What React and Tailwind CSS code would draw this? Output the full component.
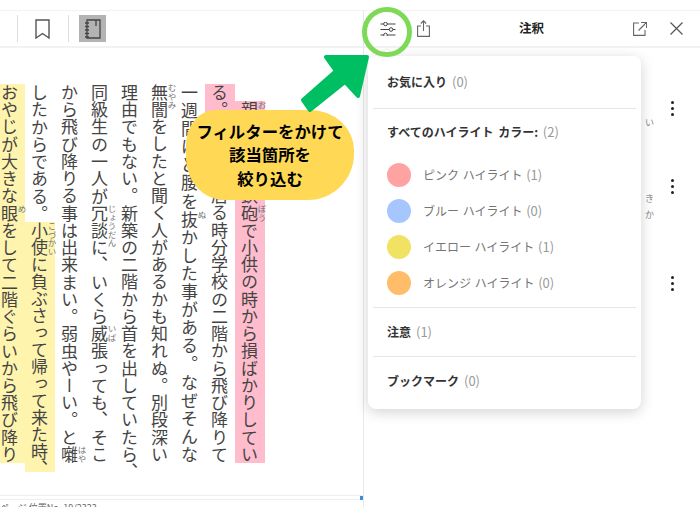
import React from "react";

const jp = "[font-family:'Noto_Sans_CJK_JP','Noto_Sans',sans-serif]";

// furigana sits on the right of the base text without widening the line
const R = ({ b, t }) => (
  <span className="relative inline-block">
    {b}
    <span className="absolute inset-y-0 -right-[2px] flex w-[9px] justify-center whitespace-nowrap text-[8.5px] leading-[9px] text-[#777] [text-align-last:center]">
      {t}
    </span>
  </span>
);

const Col = ({ h, bg = "", children }) => (
  <div
    className={`w-[30px] shrink-0 whitespace-nowrap pr-[1px] text-[17px] leading-[30px] text-[#444] text-justify [text-align-last:justify] [writing-mode:vertical-rl] ${bg}`}
    style={{ height: h }}
  >
    {children}
  </div>
);

const Swatch = ({ color, label, n }) => (
  <div className="flex h-[36px] items-center">
    <span className={`h-[24px] w-[24px] rounded-full ${color}`} />
    <span className="ml-[12px] text-[12px] text-[#757575] [word-spacing:1px]">
      {label} <span className="text-[13px] text-[#999]">({n})</span>
    </span>
  </div>
);

const Kebab = ({ className }) => (
  <div className={`flex flex-col items-center gap-[3px] ${className}`}>
    <span className="h-[3px] w-[3px] rounded-full bg-[#222]" />
    <span className="h-[3px] w-[3px] rounded-full bg-[#222]" />
    <span className="h-[3px] w-[3px] rounded-full bg-[#222]" />
  </div>
);

export default function App() {
  return (
    <div className={`relative flex h-[507px] w-[700px] flex-col overflow-hidden bg-white ${jp}`}>
      <div className="h-[11px] shrink-0 border-b border-[#f3f3f3]" />
      <div className="flex min-h-0 flex-1">
        {/* reader */}
        <div className="flex w-[364px] shrink-0 flex-col border-r border-[#e8e8e8]">
          <div className="flex h-[37px] shrink-0 items-center border-b-2 border-[#f2f2f2]">
            <div className="ml-[17px] h-[27px] w-px bg-[#ddd]" />
            <svg className="ml-[17px] h-[20px] w-[15px]" viewBox="0 0 15 20" fill="none" stroke="#555" strokeWidth="1.4">
              <path d="M1 1h13v18l-6.5-4.5L1 19z" />
            </svg>
            <div className="ml-[18px] h-[27px] w-px bg-[#ddd]" />
            <div className="ml-[10px] flex h-[27px] w-[27px] items-center justify-center bg-[#b3b3b3]">
              <svg className="h-[20px] w-[17px]" viewBox="0 0 17 20" fill="none" stroke="#444" strokeWidth="1.3">
                <path d="M3 1h13v18H3z" />
                <path d="M12 1v6" />
                <path d="M1 4h4M1 7.500h4M1 11h4M1 14.500h4M1 18h4" />
              </svg>
            </div>
          </div>
          <div className="flex min-h-0 flex-1 flex-row-reverse overflow-hidden pr-[98px] pt-[36px]">
            <div className="flex w-[30px] shrink-0 flex-col pt-[17px]">
              <Col h={362} bg="bg-[#ffbccd]">
                <R b="親" t="おや" />譲りの無鉄<R b="砲" t="ぼう" />で小供の時から損ばかりしてい
              </Col>
            </div>
            <div className="flex w-[30px] shrink-0 flex-col">
              <Col h={34} bg="bg-[#ffbccd]">る。</Col>
              <Col h={345}>小学校に居る時分学校の二階から飛び降りて</Col>
            </div>
            <Col h={379}>
              一週間ほど腰を<R b="抜" t="ぬ" />かした事がある。なぜそんな
            </Col>
            <Col h={379}>
              <R b="無闇" t="むやみ" />をしたと聞く人があるかも知れぬ。別段深い
            </Col>
            <Col h={396}>理由でもない。新築の二階から首を出していたら、</Col>
            <Col h={379}>
              同級生の一人が<R b="冗談" t="じょうだん" />に、いくら<R b="威張" t="いば" />っても、そこ
            </Col>
            <Col h={379}>
              から飛び降りる事は出来まい。弱虫やーい。と<R b="囃" t="はや" />
            </Col>
            <div className="flex w-[30px] shrink-0 flex-col">
              <Col h={138}>したからである。</Col>
              <Col h={250} bg="bg-[#fff4ae]">
                <R b="小使" t="こづかい" />に負ぶさって帰って来た時、
              </Col>
            </div>
            <Col h={379} bg="bg-[#fff4ae]">
              おやじが大きな<R b="眼" t="め" />をして二階ぐらいから飛び降り
            </Col>
          </div>
          <div className="relative h-[5px] shrink-0 border-y border-[#eeeeee]">
            <div className="absolute right-0 top-0 h-[4px] w-[3px] bg-[#3a8ee0]" />
          </div>
          <div className="h-[7px] shrink-0 overflow-hidden pt-[3px] text-[9px] leading-[10px] text-[#666]">
            ページ 位置No. 19/2323
          </div>
        </div>

        {/* notes panel */}
        <div className="relative min-w-0 flex-1">
          <div className="flex h-[37px] items-center border-b-2 border-[#f2f2f2]">
            <svg className="ml-[16px] h-[14px] w-[16px]" viewBox="0 0 16 14" fill="#fff" stroke="#444" strokeWidth="1">
              <path d="M0.500 2h15M0.500 7.500h15M0.500 13h15" />
              <circle cx="5.500" cy="2" r="1.800" />
              <circle cx="11" cy="7.500" r="1.800" />
              <circle cx="5.500" cy="13" r="1.800" />
            </svg>
            <svg className="ml-[21px] h-[17px] w-[13px]" viewBox="0 0 13 17" fill="none" stroke="#666" strokeWidth="1.100">
              <path d="M4 6H0.600v10.400h11.800V6H9" />
              <path d="M6.500 11V1M3.800 3.500l2.700-2.700 2.700 2.700" />
            </svg>
            <span className="ml-[89px] text-[12.5px] font-bold text-[#222]">注釈</span>
            <svg className="ml-[89px] h-[15px] w-[14px]" viewBox="0 0 14 15" fill="none" stroke="#666" strokeWidth="1.100">
              <path d="M6 2H0.600v12.400H12V9" />
              <path d="M5.500 9.500L13 2M8 1.500h5.500V7" />
            </svg>
            <svg className="ml-[23px] h-[13px] w-[13px]" viewBox="0 0 13 13" fill="none" stroke="#555" strokeWidth="1.200">
              <path d="M0.500 0.500l12 12M12.500 0.500l-12 12" />
            </svg>
          </div>

          <div className="relative flex flex-col items-end pr-[26px]">
            <Kebab className="mt-[53px]" />
            <span className="absolute right-[46px] top-[68px] text-[9px] text-[#888]">い</span>
            <Kebab className="mt-[63px]" />
            <span className="absolute right-[46px] top-[143px] text-[9px] leading-[16px] text-[#888]">
              き<br />か
            </span>
            <Kebab className="mt-[82px]" />
          </div>

          {/* filter popup */}
          <div className="absolute left-[4px] top-[45px] w-[273px] rounded-lg bg-white shadow-[0_3px_14px_rgba(0,0,0,0.18)]">
            <div className="absolute -top-[5px] left-[14px] h-[10px] w-[10px] rotate-45 rounded-[2px] bg-white shadow-[-1px_-1px_2px_rgba(0,0,0,0.06)]" />
            <div className="relative mx-[5px]">
              <div className="flex h-[53px] items-center border-b border-[#e6e6e6] px-[14px] text-[12px] font-bold text-[#333]">
                お気に入り <span className="ml-[5px] text-[13px] font-normal text-[#999]">(0)</span>
              </div>
              <div className="border-b border-[#e6e6e6] px-[14px] pb-[6px] pt-[14px]">
                <div className="mb-[16px] text-[12px] font-bold leading-[18px] text-[#333] [word-spacing:2px]">
                  すべてのハイライト カラー: <span className="text-[13px] font-normal text-[#999]">(2)</span>
                </div>
                <Swatch color="bg-[#ffa2a2]" label="ピンク ハイライト" n="1" />
                <Swatch color="bg-[#a6c6ff]" label="ブルー ハイライト" n="0" />
                <Swatch color="bg-[#f2e264]" label="イエロー ハイライト" n="1" />
                <Swatch color="bg-[#ffbd69]" label="オレンジ ハイライト" n="0" />
              </div>
              <div className="flex h-[49px] items-center border-b border-[#e6e6e6] px-[14px] pb-[1px] text-[12px] font-bold text-[#333]">
                注意 <span className="ml-[5px] text-[13px] font-normal text-[#999]">(1)</span>
              </div>
              <div className="flex h-[52px] items-center px-[14px] pb-[4px] text-[12px] font-bold text-[#333]">
                ブックマーク <span className="ml-[5px] text-[13px] font-normal text-[#999]">(0)</span>
              </div>
            </div>
          </div>
        </div>
      </div>

      {/* annotations over the screenshot */}
      <div className="absolute left-[186px] top-[110px] flex h-[90px] w-[168px] flex-col items-center justify-center rounded-[30px_44px_46px_38px/34px_40px_46px_42px] bg-[#ffd955] text-center text-[16.400px] font-bold leading-[23.500px] text-black">
        <div>フィルターをかけて</div>
        <div>該当箇所を</div>
        <div>絞り込む</div>
      </div>
      <svg className="absolute left-[295px] top-[45px] h-[75px] w-[80px]" viewBox="295 45 80 75" fill="#00bf63" stroke="#00bf63" strokeWidth="4" strokeLinejoin="round">
        <path d="M326 57H367L358 96L345 82L310 110L303 100L336 71z" />
      </svg>
      <div className="absolute left-[362px] top-[7px] h-[50px] w-[50px] rounded-full border-[5px] border-[#7ed957]" />
    </div>
  );
}
